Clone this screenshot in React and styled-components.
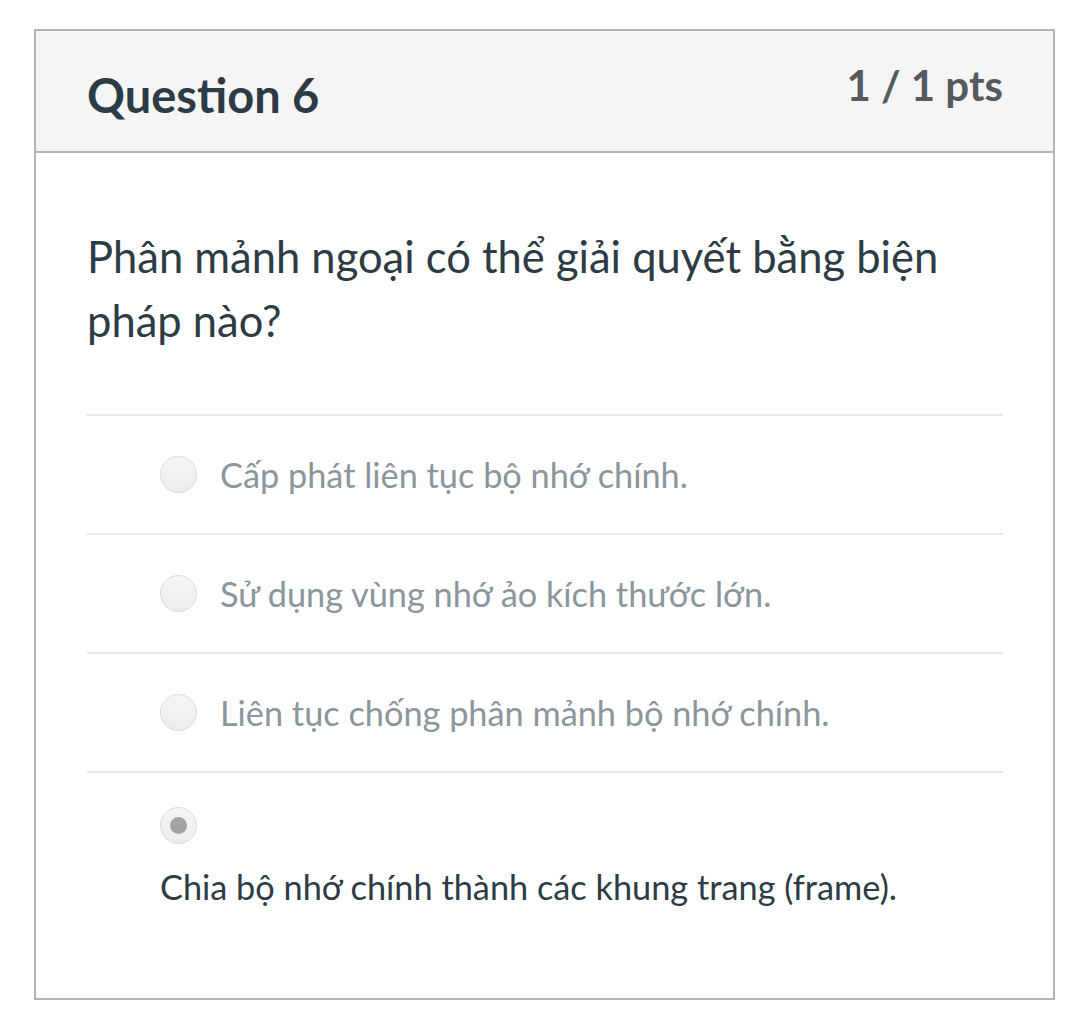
import React from "react";
import styled, { createGlobalStyle } from "styled-components";

const Global = createGlobalStyle`
  html, body { margin: 0; padding: 0; background: #ffffff; }
  body { font-family: Lato, "Noto Sans", sans-serif; }
`;

const Page = styled.div`
  padding: 29px 0 0 34px;
`;

const Card = styled.section`
  width: 1021px;
  box-sizing: border-box;
  border: 2px solid #b4b4b4;
  background: #fff;
`;

const Header = styled.header`
  display: flex;
  justify-content: space-between;
  align-items: flex-start;
  height: 122px;
  box-sizing: border-box;
  padding: 0 50px 0 51px;
  background: #f5f5f5;
  border-bottom: 2px solid #b4b4b4;
`;

const Title = styled.h2`
  margin: 39px 0 0;
  font-size: 47px;
  line-height: 50px;
  font-weight: 700;
  color: #2d3b45;
`;

const Points = styled.div`
  margin-top: 32px;
  font-size: 42px;
  line-height: 44px;
  font-weight: 700;
  color: #555a5e;
`;

const Body = styled.div`
  padding: 71px 50px 91px 51px;
`;

const QuestionText = styled.p`
  margin: 0 0 62px;
  font-size: 43.5px;
  line-height: 64px;
  color: #2d3b45;
`;

const AnswerList = styled.div`
  display: flex;
  flex-direction: column;
`;

const Answer = styled.label`
  display: flex;
  flex-direction: ${(p) => (p.$stacked ? "column" : "row")};
  align-items: ${(p) => (p.$stacked ? "flex-start" : "center")};
  gap: 23px;
  min-height: ${(p) => (p.$stacked ? "auto" : "119px")};
  padding: ${(p) => (p.$stacked ? "34px 0 0 73px" : "0 0 0 73px")};
  border-top: 2px solid #e8e8e8;
  box-sizing: border-box;
`;

const Radio = styled.span`
  flex: none;
  width: 37px;
  height: 37px;
  box-sizing: border-box;
  border-radius: 50%;
  border: 1.5px solid #dcdcdc;
  background: linear-gradient(#f6f6f6, #ececec);
  display: flex;
  align-items: center;
  justify-content: center;
  &::after {
    content: "";
    width: 17px;
    height: 17px;
    border-radius: 50%;
    background: #a3a3a3;
    display: ${(p) => (p.$checked ? "block" : "none")};
  }
`;

const AnswerText = styled.span`
  font-size: 34.3px;
  line-height: 40px;
  color: ${(p) => (p.$selected ? "#2d3b45" : "#8b959c")};
`;

const answers = [
  "Cấp phát liên tục bộ nhớ chính.",
  "Sử dụng vùng nhớ ảo kích thước lớn.",
  "Liên tục chống phân mảnh bộ nhớ chính.",
];

export default function App() {
  return (
    <Page>
      <Global />
      <Card>
        <Header>
          <Title>Question 6</Title>
          <Points>1 / 1 pts</Points>
        </Header>
        <Body>
          <QuestionText>
            Phân mảnh ngoại có thể giải quyết bằng biện pháp nào?
          </QuestionText>
          <AnswerList>
            {answers.map((a) => (
              <Answer key={a}>
                <Radio />
                <AnswerText>{a}</AnswerText>
              </Answer>
            ))}
            <Answer $stacked>
              <Radio $checked />
              <AnswerText $selected>
                Chia bộ nhớ chính thành các khung trang (frame).
              </AnswerText>
            </Answer>
          </AnswerList>
        </Body>
      </Card>
    </Page>
  );
}
